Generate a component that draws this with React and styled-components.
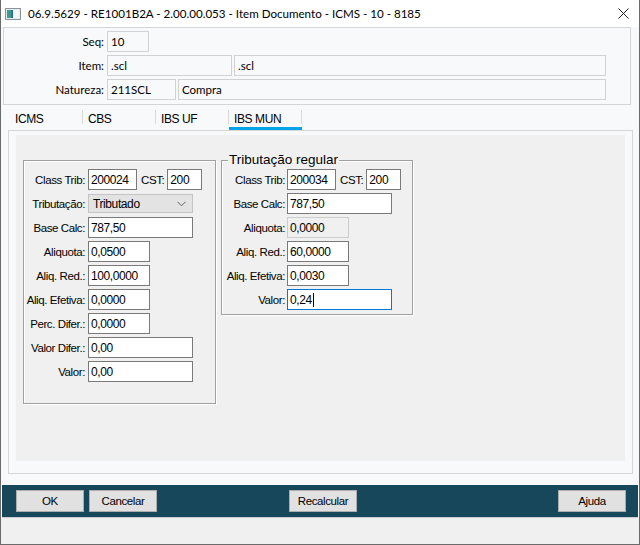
import React from 'react';
import styled, { createGlobalStyle, css } from 'styled-components';

const ui = `Lato, "Noto Sans", "Liberation Sans", sans-serif`;

// no narrow family is installed, so squeeze Liberation Sans a little
const narrowText = css`
  font-family: "Liberation Sans", Arial, sans-serif;
  font-size: 11.5px;
  letter-spacing: -0.4px;
`;

const GlobalStyle = createGlobalStyle`
  html, body { margin: 0; padding: 0; background: #ffffff; }
  body { font-family: ${ui}; color: #000; }
  * { box-sizing: border-box; }
`;

const leftRows = [
  { label: 'Class Trib:', w: 49, v: '200024', cst: '200' },
  { label: 'Tributação:', select: 'Tributado' },
  { label: 'Base Calc:', w: 105, v: '787,50' },
  { label: 'Aliquota:', w: 62, v: '0,0500' },
  { label: 'Aliq. Red.:', w: 62, v: '100,0000' },
  { label: 'Aliq. Efetiva:', w: 62, v: '0,0000' },
  { label: 'Perc. Difer.:', w: 62, v: '0,0000' },
  { label: 'Valor Difer.:', w: 105, v: '0,00' },
  { label: 'Valor:', w: 105, v: '0,00' },
];

const rightRows = [
  { label: 'Class Trib:', w: 49, v: '200034', cst: '200' },
  { label: 'Base Calc:', w: 105, v: '787,50' },
  { label: 'Aliquota:', w: 62, v: '0,0000', disabled: true },
  { label: 'Aliq. Red.:', w: 62, v: '60,0000' },
  { label: 'Aliq. Efetiva:', w: 62, v: '0,0030' },
  { label: 'Valor:', w: 105, v: '0,24', focus: true },
];

const tabs = ['ICMS', 'CBS', 'IBS UF', 'IBS MUN'];

const AppIcon = () => (
  <svg width="16" height="12" viewBox="0 0 16 12">
    <rect x="0.5" y="0.5" width="15" height="11" fill="#e8ecef" stroke="#8a949c" />
    <rect x="2" y="2" width="4" height="8" fill="#3f9b8a" />
    <rect x="6" y="2" width="2" height="8" fill="#2a6fb8" />
    <rect x="9" y="2" width="5" height="8" fill="#f4f6f8" />
  </svg>
);

const CloseIcon = () => (
  <svg width="11" height="11" viewBox="0 0 11 11">
    <path d="M0.5 0.5 L10.5 10.5 M10.5 0.5 L0.5 10.5" stroke="#1a1a1a" strokeWidth="1" />
  </svg>
);

const Chevron = () => (
  <svg width="9" height="6" viewBox="0 0 9 6">
    <path d="M0.5 0.8 L4.5 4.8 L8.5 0.8" fill="none" stroke="#606060" strokeWidth="1" />
  </svg>
);

function FormRow({ row }) {
  return (
    <Row>
      <Label>{row.label}</Label>
      {row.select ? (
        <Select>
          <span>{row.select}</span>
          <Chevron />
        </Select>
      ) : (
        <Field $w={row.w} $disabled={row.disabled} $focus={row.focus}>
          {row.v}
          {row.focus && <Caret />}
        </Field>
      )}
      {row.cst && (
        <>
          <CstLabel>CST:</CstLabel>
          <Field $w={35}>{row.cst}</Field>
        </>
      )}
    </Row>
  );
}

export default function App() {
  return (
    <>
      <GlobalStyle />
      <Window>
        <TitleBar>
          <AppIcon />
          <Title>06.9.5629 - RE1001B2A - 2.00.00.053 - Item Documento - ICMS - 10 - 8185</Title>
          <CloseButton><CloseIcon /></CloseButton>
        </TitleBar>

        <HeaderPanel>
          <HeaderRow>
            <HeaderLabel>Seq:</HeaderLabel>
            <HeaderField $w={42}>10</HeaderField>
          </HeaderRow>
          <HeaderRow>
            <HeaderLabel>Item:</HeaderLabel>
            <HeaderField $w={125}>.scl</HeaderField>
            <HeaderField $w={372}>.scl</HeaderField>
          </HeaderRow>
          <HeaderRow>
            <HeaderLabel>Natureza:</HeaderLabel>
            <HeaderField $w={69}>211SCL</HeaderField>
            <HeaderField $w={428}>Compra</HeaderField>
          </HeaderRow>
        </HeaderPanel>

        <TabBar>
          {tabs.map((t, i) => (
            <Tab key={t} $active={i === tabs.length - 1}>{t}</Tab>
          ))}
        </TabBar>

        <TabPanel>
          <TabContent>
            <GroupBox $w={193} $h={244} $pad="8px 0 0 1px" $lw={60} $gap={3}>
              {leftRows.map(r => <FormRow key={r.label} row={r} />)}
            </GroupBox>
            <GroupBox as="fieldset" $legend $w={192} $pad="2px 0 4px 0" $lw={63} $gap={2}>
              <Legend>Tributação regular</Legend>
              {rightRows.map(r => <FormRow key={r.label} row={r} />)}
            </GroupBox>
          </TabContent>
        </TabPanel>

        <Footer>
          <Button>OK</Button>
          <Button>Cancelar</Button>
          <Button $ml={127}>Recalcular</Button>
          <Button $ml="auto">Ajuda</Button>
        </Footer>
        <BottomStrip />
      </Window>
    </>
  );
}

const Window = styled.div`
  width: 640px;
  height: 545px;
  display: flex;
  flex-direction: column;
  background: #f8f9fb;
  border-left: 1px solid #6b6b6b;
  border-right: 1px solid #6b6b6b;
  border-bottom: 1px solid #6b6b6b;
  overflow: hidden;
`;

const TitleBar = styled.div`
  height: 27px;
  flex: none;
  display: flex;
  align-items: center;
  background: #ffffff;
  padding-left: 4px;
`;

const Title = styled.div`
  margin-left: 7px;
  font: 11.6px ${ui};
  white-space: nowrap;
  color: #000;
`;

const CloseButton = styled.div`
  margin-left: auto;
  margin-right: 10px;
  display: flex;
  align-items: center;
`;

const HeaderPanel = styled.div`
  width: 628px;
  height: 78px;
  flex: none;
  margin-left: 2px;
  border: 1px solid #d3d5d8;
  padding-top: 3px;
  display: flex;
  flex-direction: column;
  gap: 3px;
`;

const HeaderRow = styled.div`
  display: flex;
  align-items: center;
  gap: 2px;
  height: 21px;
`;

const HeaderLabel = styled.div`
  width: 100px;
  margin-right: 1px;
  text-align: right;
  font: 11.5px ${ui};
`;

const HeaderField = styled.div`
  width: ${p => p.$w}px;
  height: 21px;
  border: 1px solid #cfd1d4;
  background: #f8f9fb;
  padding-left: 3px;
  display: flex;
  align-items: center;
  font: 11.5px ${ui};
`;

const TabBar = styled.div`
  height: 25px;
  flex: none;
  display: flex;
  padding-left: 9px;
`;

const Tab = styled.div`
  position: relative;
  width: 73px;
  height: 25px;
  padding: 7px 0 0 5px;
  ${narrowText};
  font-size: 12px;
  box-shadow: ${p => (p.$active ? 'inset 0 -3px 0 #00a2e8' : 'none')};

  &::after {
    content: '';
    position: absolute;
    right: 0;
    top: 5px;
    width: 1px;
    height: 14px;
    background: #d9d9d9;
  }
`;

const TabPanel = styled.div`
  width: 625px;
  height: 344px;
  flex: none;
  margin-left: 7px;
  border: 1px solid #d5d6d8;
  padding: 4px 7px 12px 7px;
  display: flex;
`;

const TabContent = styled.div`
  flex: 1;
  background: #f0f0f0;
  display: flex;
  align-items: flex-start;
  gap: 5px;
  padding: 18px 0 0 7px;
`;

const GroupBox = styled.div`
  width: ${p => p.$w}px;
  ${p => (p.$h ? `height: ${p.$h}px;` : '')}
  margin: ${p => (p.$legend ? '0' : '7px 0 0 0')};
  min-width: 0;
  border: 1px solid #a0a0a0;
  box-shadow: 1px 1px 0 #ffffff, inset 1px 1px 0 #ffffff;
  padding: ${p => p.$pad};
  display: flex;
  flex-direction: column;
  gap: 3px;

  --lw: ${p => p.$lw}px;
  --lgap: ${p => p.$gap}px;
`;

const Legend = styled.legend`
  margin-left: 6px;
  padding: 0 1px;
  font-family: "Liberation Sans", Arial, sans-serif;
  font-size: 13.5px;
  line-height: 14px;
`;

const Row = styled.div`
  display: flex;
  align-items: center;
  height: 21px;
`;

const Label = styled.div`
  width: var(--lw);
  margin-right: var(--lgap);
  flex: none;
  text-align: right;
  white-space: nowrap;
  ${narrowText};
`;

const CstLabel = styled.div`
  margin: 0 3px 0 4px;
  ${narrowText};
`;

const Field = styled.div`
  width: ${p => p.$w}px;
  height: 21px;
  flex: none;
  border: 1px solid ${p => (p.$focus ? '#0078d7' : p.$disabled ? '#cccccc' : '#7a7a7a')};
  background: ${p => (p.$disabled ? '#f0f0f0' : '#ffffff')};
  padding-left: 2px;
  display: flex;
  align-items: center;
  ${narrowText};
  font-size: 12px;
`;

const Caret = styled.span`
  width: 1px;
  height: 14px;
  background: #000;
  margin-left: 1px;
`;

const Select = styled.div`
  width: 105px;
  height: 19px;
  border: 1px solid #c4c4c4;
  background: #e3e3e3;
  display: flex;
  align-items: center;
  justify-content: space-between;
  padding: 0 6px 0 4px;
  ${narrowText};
  font-size: 12px;
`;

const Footer = styled.div`
  height: 33px;
  flex: none;
  margin: 11px 1px 0 1px;
  background: #17475b;
  border-bottom: 1px solid #c9ccd0;
  display: flex;
  align-items: center;
  padding: 0 12px 0 14px;
  gap: 5px;
`;

const Button = styled.div`
  width: 68px;
  height: 22px;
  margin-left: ${p => (p.$ml === 'auto' ? 'auto' : p.$ml ? `${p.$ml}px` : '0')};
  background: #e1e1e1;
  border: 1px solid #adadad;
  display: flex;
  align-items: center;
  justify-content: center;
  ${narrowText};
`;

const BottomStrip = styled.div`
  flex: 1;
  background: #f0f0f0;
`;
